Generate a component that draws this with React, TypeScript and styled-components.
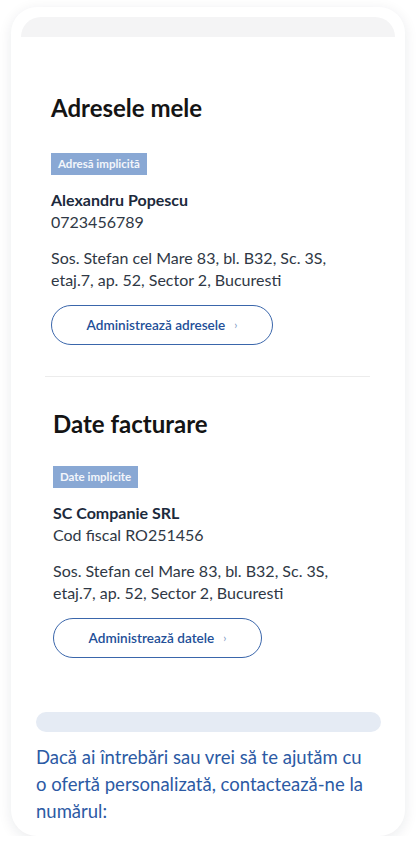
import React, {FC} from 'react';
import styled, {createGlobalStyle} from 'styled-components';

const GlobalStyle = createGlobalStyle`
  html, body {
    margin: 0;
    padding: 0;
    background: #ffffff;
    font-family: Lato, "Noto Sans", "Liberation Sans", sans-serif;
  }
  * {
    box-sizing: border-box;
  }
`

const Card = styled.div`
  width: 394px;
  margin: 7px 0 0 11px;
  padding: 10px 10px 11px;
  border-radius: 26px;
  background: #fff;
  box-shadow: 0 3px 14px rgba(20, 30, 50, 0.09);
`

const TopBar = styled.div`
  height: 20px;
  background: #f4f4f5;
  border-radius: 20px 20px 0 0;
`

const Section = styled.section<{ $indent: number; $top: number }>`
  padding-left: ${p => p.$indent}px;
  margin-top: ${p => p.$top}px;
`

const Title = styled.h2`
  margin: 0;
  font-size: 24px;
  line-height: 1.2;
  font-weight: 700;
  color: #141414;
`

const Badge = styled.span<{ $top: number }>`
  display: inline-block;
  margin-top: ${p => p.$top}px;
  height: 22px;
  padding: 0 7px;
  background: #89a8d4;
  color: #f3f6fb;
  font-size: 11.5px;
  line-height: 22px;
  font-weight: 700;
`

const Name = styled.div`
  margin-top: 14px;
  font-size: 16px;
  line-height: 22px;
  font-weight: 700;
  color: #1c2a3c;
`

const Line = styled.div`
  font-size: 16px;
  line-height: 22px;
  color: #2f3845;
`

const Address = styled.div`
  margin-top: 14px;
  font-size: 16px;
  line-height: 22px;
  color: #2f3845;
`

const Button = styled.button<{ $width: number }>`
  display: flex;
  align-items: center;
  justify-content: center;
  gap: 9px;
  width: ${p => p.$width}px;
  height: 40px;
  margin-top: 14px;
  padding: 0;
  border: 1px solid #3a66ab;
  border-radius: 20px;
  background: #fff;
  color: #234f98;
  font-family: inherit;
  font-size: 13.6px;
  font-weight: 600;
  cursor: pointer;

  > .arrow {
    font-size: 11px;
    color: #7d96c2;
    font-weight: 400;
  }
`

const Divider = styled.hr`
  margin: 31px 25px 0 24px;
  border: 0;
  border-top: 1px solid #ececec;
`

const Footer = styled.div`
  margin-top: 54px;
  padding: 0 14px 0 15px;
`

const FooterBar = styled.div`
  height: 20px;
  border-radius: 10px;
  background: #e5ebf4;
`

const FooterText = styled.p`
  margin: 12px 0 0;
  padding-right: 12px;
  font-size: 18.5px;
  line-height: 27px;
  color: #2c5aa4;
`

const App: FC = () => {
  return (
    <>
      <GlobalStyle />
      <Card>
        <TopBar />
        <Section $indent={30} $top={57}>
          <Title>Adresele mele</Title>
          <Badge $top={30}>Adresă implicită</Badge>
          <Name>Alexandru Popescu</Name>
          <Line>0723456789</Line>
          <Address>
            Sos. Stefan cel Mare 83, bl. B32, Sc. 3S,<br />
            etaj.7, ap. 52, Sector 2, Bucuresti
          </Address>
          <Button $width={222}>
            Administrează adresele <span className="arrow">›</span>
          </Button>
        </Section>
        <Divider />
        <Section $indent={32} $top={33}>
          <Title>Date facturare</Title>
          <Badge $top={27}>Date implicite</Badge>
          <Name>SC Companie SRL</Name>
          <Line>Cod fiscal RO251456</Line>
          <Address>
            Sos. Stefan cel Mare 83, bl. B32, Sc. 3S,<br />
            etaj.7, ap. 52, Sector 2, Bucuresti
          </Address>
          <Button $width={209}>
            Administrează datele <span className="arrow">›</span>
          </Button>
        </Section>
        <Footer>
          <FooterBar />
          <FooterText>
            Dacă ai întrebări sau vrei să te ajutăm cu o ofertă personalizată, contactează-ne la numărul:
          </FooterText>
        </Footer>
      </Card>
    </>
  )
}

export default App
